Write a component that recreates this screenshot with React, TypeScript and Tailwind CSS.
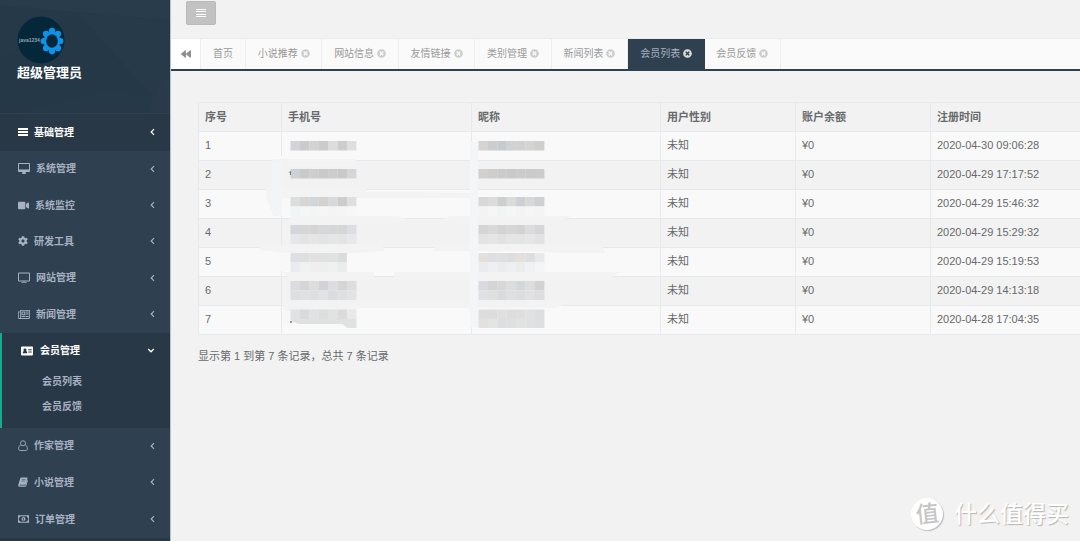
import React from "react";
import { FaBackward, FaCog, FaTimesCircle, FaVideo } from "react-icons/fa";

function BarsIcon() {
  return (
    <svg width="10" height="10" viewBox="0 0 10 10" fill="currentColor" shapeRendering="crispEdges" aria-hidden="true">
      <path d="M0 1h10v2H0zM0 4h10v2H0zM0 7h10v2H0z" />
    </svg>
  );
}

function AlignIcon() {
  return (
    <svg width="10" height="10" viewBox="0 0 10 10" fill="currentColor" shapeRendering="crispEdges" aria-hidden="true">
      <path d="M0 1h10v1H0zM0 3h10v1H0zM0 6h10v1H0zM0 8h10v1H0z" />
    </svg>
  );
}

function AngleLeftIcon() {
  return (
    <svg width="5" height="8" viewBox="0 0 5 8" fill="none" stroke="currentColor" strokeWidth="1.200" aria-hidden="true">
      <path d="M4 1.200 1.200 4 4 6.800" />
    </svg>
  );
}

function AngleDownIcon() {
  return (
    <svg width="8" height="5" viewBox="0 0 8 5" fill="none" stroke="currentColor" strokeWidth="1.300" aria-hidden="true">
      <path d="M1.200 1 4 3.800 6.800 1" />
    </svg>
  );
}

function DesktopIcon() {
  return (
    <svg width="12" height="11" viewBox="0 0 24 22" fill="currentColor" aria-hidden="true">
      <path fillRule="evenodd" d="M2 0h20a2 2 0 0 1 2 2v14a2 2 0 0 1-2 2h-7c0 1.500 1 2 1 3 0 .6-.4 1-1 1H9c-.6 0-1-.4-1-1 0-1 1-1.500 1-3H2a2 2 0 0 1-2-2V2a2 2 0 0 1 2-2zm0 2v11h20V2z" />
    </svg>
  );
}

function TvIcon() {
  return (
    <svg width="12" height="11" viewBox="0 0 24 22" fill="currentColor" aria-hidden="true">
      <path fillRule="evenodd" d="M2 1h20a2 2 0 0 1 2 2v14a2 2 0 0 1-2 2h-9v1h4v1.500H7V20h4v-1H2a2 2 0 0 1-2-2V3a2 2 0 0 1 2-2zm0 2v14h20V3z" />
    </svg>
  );
}

function NewsIcon() {
  return (
    <svg width="12" height="9" viewBox="0 0 24 18" fill="currentColor" aria-hidden="true">
      <path fillRule="evenodd" d="M4 0h20v15a3 3 0 0 1-3 3H3a3 3 0 0 1-3-3V3h4zm-2.400 4.500V15a1.200 1.200 0 0 0 2.400 0V4.500zM5.600 1.600V16H21a1.400 1.400 0 0 0 1.400-1.400v-13zM7 3h7.500v7.500H7zM9 5v3.500h3.500V5zM15.500 3H21.500v2h-6zm0 4h6v2h-6zm-8.500 5h7.500v2H7zm8.500 0h6v2h-6z" />
    </svg>
  );
}

function CardIcon() {
  return (
    <svg width="12" height="10" viewBox="0 0 24 20" fill="currentColor" aria-hidden="true">
      <path fillRule="evenodd" d="M2 1h20a2 2 0 0 1 2 2v14a2 2 0 0 1-2 2H2a2 2 0 0 1-2-2V3a2 2 0 0 1 2-2zm6 4a2.800 2.800 0 0 0-2 5c-1.600.5-2.500 2-2.500 4.500h9c0-2.500-.9-4-2.500-4.500a2.800 2.800 0 0 0-2-5zm6.500 1.500v2h7v-2zm0 4.500v2h7v-2z" />
    </svg>
  );
}

function UserIcon() {
  return (
    <svg width="10" height="11" viewBox="0 0 20 22" fill="none" stroke="currentColor" strokeWidth="1.800" aria-hidden="true">
      <circle cx="10" cy="6.500" r="5" />
      <path d="M5.500 10C2.500 11 1.200 14 1.200 17.500c0 2 1.200 3.500 3 3.500h11.600c1.800 0 3-1.500 3-3.500 0-3.500-1.300-6.500-4.300-7.500" />
    </svg>
  );
}

function BookIcon() {
  return (
    <svg width="10" height="10" viewBox="0 0 20 20" fill="currentColor" aria-hidden="true">
      <path fillRule="evenodd" d="M7 1h10.500c1.200 0 1.800 1 1.500 2l-3.200 11c-.3 1-1 1.500-2 1.500H3.500c-.8 0-.8 1.300.5 1.300h11L18.500 6c1.200.6 1.200 1.500 1 2.300L16.500 18c-.3.900-1.200 1.500-2 1.500H3.200C1.200 19.500 0 17.500.5 15.800L4.200 3.500C4.700 1.800 5.500 1 7 1zm.8 3.500-.3.900h7.400l.3-.9zM7 7.400l-.3.900H14l.3-.9z" />
    </svg>
  );
}

function MoneyIcon() {
  return (
    <svg width="11" height="8" viewBox="0 0 24 16" fill="currentColor" aria-hidden="true">
      <path fillRule="evenodd" d="M0 0h24v16H0zm5 1.800A3.200 3.200 0 0 1 1.800 5v6A3.200 3.200 0 0 1 5 14.200h14a3.200 3.200 0 0 1 3.200-3.200V5A3.200 3.200 0 0 1 19 1.800z" />
      <path fillRule="evenodd" d="M12 3c2.500 0 4 2.300 4 5s-1.500 5-4 5-4-2.300-4-5 1.500-5 4-5zm-.6 2L10 6.200v1l1.200-.4V10H10v1.200h4V10h-1.200V5z" />
    </svg>
  );
}

type Item = { label: string; icon: React.ReactNode };

const mainItems: Item[] = [
  { label: "系统管理", icon: <DesktopIcon /> },
  { label: "系统监控", icon: <FaVideo size={11} /> },
  { label: "研发工具", icon: <FaCog size={10} /> },
  { label: "网站管理", icon: <TvIcon /> },
  { label: "新闻管理", icon: <NewsIcon /> },
];

const lowerItems: Item[] = [
  { label: "作家管理", icon: <UserIcon /> },
  { label: "小说管理", icon: <BookIcon /> },
  { label: "订单管理", icon: <MoneyIcon /> },
];

function MenuLink({ label, icon }: Item) {
  return (
    <a href="#" className="flex h-full items-center gap-[6px] pr-[15px] pb-px pl-[18px]">
      {icon}
      <span className="flex-1">{label}</span>
      <AngleLeftIcon />
    </a>
  );
}

function Avatar() {
  return (
    <svg width="48" height="48" viewBox="0 0 48 48" role="img" aria-label="avatar">
      <circle cx="24" cy="24" r="23.500" fill="#04283a" />
      <text x="2" y="26" fontSize="5" fill="#8fa2ad" fontFamily="Liberation Sans">java1234</text>
      <g fill="#0d93ea">
        <circle cx="35" cy="15" r="3.200" />
        <circle cx="41" cy="17.800" r="3.100" />
        <circle cx="43.400" cy="25" r="3.100" />
        <circle cx="41" cy="32.200" r="3.100" />
        <circle cx="35" cy="35" r="3.200" />
        <circle cx="29" cy="32.200" r="3.100" />
        <circle cx="26.600" cy="25" r="3.100" />
        <circle cx="29" cy="17.800" r="3.100" />
        <ellipse cx="35" cy="25" rx="8.400" ry="9.600" />
      </g>
      <ellipse cx="35" cy="25" rx="5.800" ry="6.800" fill="#04283a" />
    </svg>
  );
}

function Sidebar() {
  return (
    <aside className="w-[170px] shrink-0 bg-[#2f4050] text-[10px] font-semibold text-[#a7b1c2]">
      <div className="relative h-[113px] overflow-hidden bg-[#263949] pt-4 pl-[17px]">
        <svg className="absolute inset-0 h-full w-full" viewBox="0 0 170 113" preserveAspectRatio="none" aria-hidden="true">
          <path d="M0 0h170v20L76 12 0 5z" fill="#293c4b" />
          <path d="M76 12 170 20v70l-18 6z" fill="#273a49" />
          <path d="M76 12 152 96 100 92 20 113H0V60z" fill="#253847" />
          <path d="M152 96 170 75v38h-20z" fill="#293b4a" />
        </svg>
        <div className="relative">
          <Avatar />
          <div className="text-[13px] leading-[18px] text-white">超级管理员</div>
        </div>
      </div>
      <nav>
        <div className="h-[38px] border-t border-[#2f4050] bg-[#293846] text-white">
          <MenuLink label="基础管理" icon={<BarsIcon />} />
        </div>
        <div className="grid h-[182px] auto-rows-fr">
          {mainItems.map((i) => (
            <MenuLink key={i.label} {...i} />
          ))}
        </div>
        <div className="border-l-2 border-[#19aa8d] bg-[#293846] pb-[9px]">
          <a href="#" className="flex h-9 items-center gap-[7px] pr-[15px] pb-px pl-[19px] text-white">
            <CardIcon />
            <span className="flex-1">会员管理</span>
            <AngleDownIcon />
          </a>
          <a href="#" className="flex h-[25px] items-center pl-10">会员列表</a>
          <a href="#" className="flex h-[25px] items-center pl-10">会员反馈</a>
        </div>
        <div className="grid h-[110px] auto-rows-fr">
          {lowerItems.map((i) => (
            <MenuLink key={i.label} {...i} />
          ))}
        </div>
      </nav>
      <div className="h-[3px] bg-[#293846]" />
    </aside>
  );
}

const tabs = ["小说推荐", "网站信息", "友情链接", "类别管理", "新闻列表", "会员列表", "会员反馈"];

function Tabs() {
  return (
    <div className="flex h-[33px] border-t border-b-2 border-t-[#ebebeb] border-b-[#2f4050] bg-[#fafafa] text-[10px] text-[#999999]">
      <button aria-label="向左滚动" className="flex w-[30px] items-center justify-center border-r border-[#eeeeee] bg-white text-[#8f8f8f]">
        <FaBackward size={10} />
      </button>
      <a href="#" className="flex w-[45px] items-center justify-center border-r border-[#eeeeee] pb-px">首页</a>
      <div className="grid w-[535px] grid-cols-7">
        {tabs.map((t) => {
          const active = t === "会员列表";
          return (
            <div
              key={t}
              className={
                active
                  ? "flex items-center justify-center gap-[3px] bg-[#2f4050] pb-px text-[#a7b1c2]"
                  : "flex items-center justify-center gap-[3px] border-r border-[#eeeeee] pb-px"
              }
            >
              <a href="#">{t}</a>
              <button aria-label={"关闭" + t} className={active ? "text-[#dddddd]" : "text-[#cccccc]"}>
                <FaTimesCircle size={9} />
              </button>
            </div>
          );
        })}
      </div>
    </div>
  );
}

const dates = [
  "2020-04-30 09:06:28",
  "2020-04-29 17:17:52",
  "2020-04-29 15:46:32",
  "2020-04-29 15:29:32",
  "2020-04-29 15:19:53",
  "2020-04-29 14:13:18",
  "2020-04-28 17:04:35",
];
const heads = ["序号", "手机号", "昵称", "用户性别", "账户余额", "注册时间"];

type Strip = [number, number, string[]];
const strips: Strip[] = [
  [290.5, 141, ["#d3d4d8", "#cbcbcb", "#d2d2d3", "#cbcbcb", "#dcddde", "#cdcdce", "#dedfe1"]],
  [290.5, 169, ["#cdd0d4", "#cacaca", "#cecece", "#c9c9c9", "#cccccc", "#c9c9c9", "#d4d6da"]],
  [290.5, 197, ["#dcdddf", "#d8d6d5", "#d2d6d9", "#d3d1d0", "#d7d9dd", "#cdcdcd", "#dddfe1"]],
  [290.5, 206.5, ["#f1f4f4", "#f5f5f5", "#f3f4f4", "#f6f6f6", "#f3f4f4", "#f5f5f5", "#f7f7f7"]],
  [290.5, 225, ["#d5d6d9", "#d6d6d7", "#d5d5d5", "#d7d7d7", "#d5d6d7", "#d6d6d7", "#dddee2"]],
  [290.5, 234.5, ["#e5e6e8", "#e3e3e4", "#e6e6e7", "#e2e3e4", "#e5e5e5", "#e3e4e4", "#e8e8ea"]],
  [290.5, 253, ["#dddfe2", "#dedfe0", "#e3e1df", "#dfe0e0", "#dfe2e2", "#dbdddd"]],
  [290.5, 262.5, ["#e9ecee", "#f0f1f1", "#efefef", "#edefef", "#eff0f0", "#ebecec"]],
  [290.5, 281, ["#dbdce0", "#d5d5d6", "#dddddf", "#d3d3d5", "#dcddde", "#d5d5d6", "#dddde0"]],
  [290.5, 290.5, ["#dedfe2", "#e0e1e2", "#dddfe1", "#e1e2e3", "#dadce0", "#dfe0e1", "#e3e3e5"]],
  [290.5, 309.5, ["#e1e2e4", "#dadadb", "#e0e1e2", "#dddddd", "#e1e2e2", "#dbdbdc", "#e8e9ea"]],
  [478.5, 141, ["#d6d4d2", "#cccdd0", "#c9cacc", "#d0d1d2", "#d2d1d0", "#d6d4d1", "#cfcfd0"]],
  [478.5, 169, ["#d2d0ce", "#cdcdce", "#cbcbcb", "#c9c9c9", "#cbcbcb", "#cacaca", "#cbcbcc"]],
  [478.5, 197, ["#d9d7d7", "#dcdcdc", "#cdcecf", "#dadcda", "#cecfd2", "#d8d8d9", "#cfd0d2"]],
  [478.5, 206.5, ["#f3f3f4", "#f6f6f6", "#f2f3f3", "#f5f6f6", "#f3f3f4", "#f6f6f6", "#f3f4f4"]],
  [478.5, 225, ["#d5d5d6", "#d9d9da", "#d3d3d4", "#d6d6d7", "#d3d3d4", "#dcdcdd", "#d5d6d8"]],
  [478.5, 234.5, ["#e3e3e4", "#e5e5e5", "#e1e2e3", "#e5e5e6", "#e3e4e4", "#e6e6e7", "#e2e2e4"]],
  [478.5, 253, ["#e5e0dd", "#dddfe0", "#dfdfdf", "#dddedf", "#e3dfdc", "#dddede", "#e7e9eb"]],
  [478.5, 262.5, ["#eaebed", "#edeff0", "#eaeced", "#eeefef", "#ebecec", "#f0f1f2", "#f3f5f7"]],
  [478.5, 281, ["#d9dadd", "#d5d5d6", "#d8d8d9", "#dcdddd", "#d5d6d9", "#dddddd", "#d2d2d4"]],
  [478.5, 290.5, ["#e0e1e3", "#dfdfe0", "#d9dbdc", "#e0e0e0", "#dcdddf", "#e1e1e1", "#dddddf"]],
  [478.5, 309.5, ["#dddddf", "#dcdcdd", "#e0e0df", "#dddddd", "#dededf", "#e1e1e1", "#dddedf"]],
  [478.5, 318.5, ["#e3e1e0", "#e2e5e3", "#dddedf", "#dfdfdf", "#dfe3e1", "#e0e1e2", "#dedfe0"]],
];

function Redaction() {
  return (
    <svg className="pointer-events-none absolute top-0 left-0" width="480" height="240" viewBox="198 102 480 240" aria-hidden="true">
      <g fill="#f3f3f4">
        <path d="M273 159h84l-3 7h-60l-20 4v12h-3z" />
        <path d="M266 187h100v4l104 2v5H285l-4 18h-7l-8-18z" />
        <path d="M291 216h107l8 3h38l6-3h122l-9 3H470v4H291z" />
        <path d="M260 245h122l3 6-32 2H290l-30-3z" />
        <path d="M434 245h168l3 8h-45l-25-2H434z" />
        <path d="M283 272h91v7h20v-7h226l-12 7H290z" />
        <path d="M283 302h287l-15 6H360l-8 3H285z" />
      </g>
      <g fill="#f8f8f8">
        <path d="M279 156h10v3h-10zM279 198h12v18h-12zM279 253h12v18h-12z" />
        <path d="M366 190h104v2H366z" />
      </g>
      <path d="M471 142h7v185h-8V142z" fill="#f4f5f7" />
      <path d="M272 161h10v54h-10z" fill="#f3f4f6" />
      <path d="M283 311h7v14h-7z" fill="#f7f7f7" />
      {strips.map(([x, y, colors]) =>
        colors.map((c, i) => <rect key={`${x}-${y}-${i}`} x={x + i * 9.4} y={y} width="9.500" height="9.500" fill={c} />)
      )}
      <path d="M290.500 319h66v9h-9l-5-4h-44l-7.500-3z" fill="#e0e1e1" />
      <path d="M288 172.500l3-1.500v4h-1v-2.500z" fill="#777777" />
      <path d="M290 321h2v2h-2z" fill="#999999" />
    </svg>
  );
}

const cell = "border border-[#e7eaec] px-[6px] pb-[2px] text-left";

function MembersTable() {
  return (
    <div className="relative">
      <table className="w-full table-fixed border-collapse text-[11px] leading-[18px]">
        <colgroup>
          <col className="w-[83px]" />
          <col className="w-[190px]" />
          <col className="w-[189px]" />
          <col className="w-[135px]" />
          <col className="w-[135px]" />
          <col />
        </colgroup>
        <thead>
          <tr className="h-[29px]">
            {heads.map((h) => (
              <th key={h} className="border border-[#e7eaec] px-[6px] text-left font-semibold last:border-r-0">{h}</th>
            ))}
          </tr>
        </thead>
        <tbody>
          {dates.map((d, i) => (
            <tr key={d} className="h-[29px] odd:bg-[#f9f9f9]">
              <td className={cell}>{i + 1}</td>
              <td className={cell} />
              <td className={cell} />
              <td className={cell}>未知</td>
              <td className={cell}>¥0</td>
              <td className={cell + " border-r-0 whitespace-nowrap"}>{d}</td>
            </tr>
          ))}
        </tbody>
      </table>
      <Redaction />
    </div>
  );
}

function Watermark() {
  return (
    <div className="absolute right-[11px] bottom-[11px] flex items-center gap-[11px] text-white">
      <span className="flex h-8 w-8 items-center justify-center rounded-full bg-white text-[23px] leading-none font-medium text-[#c6c6c6] shadow-[1px_1px_1px_#bbbbbb]">
        <span className="-rotate-6">值</span>
      </span>
      <span className="text-[23px] leading-8 font-medium [text-shadow:1px_1px_1px_#b5b5b5]">什么值得买</span>
    </div>
  );
}

export default function App() {
  return (
    <div className="relative flex min-h-screen overflow-hidden bg-[#f2f2f2] font-['Liberation_Sans','Noto_Sans_CJK_SC',sans-serif] text-[#676a6c]">
      <Sidebar />
      <main className="min-w-0 flex-1 border-l border-[#b9bfc6]">
        <header className="h-[38px] pt-px pl-[15px]">
          <button aria-label="菜单" className="flex h-6 w-[30px] items-center justify-center rounded-[2px] border border-[#bababa] bg-[#c2c2c2] text-white">
            <AlignIcon />
          </button>
        </header>
        <Tabs />
        <section className="pt-[31px] pl-[27px]">
          <MembersTable />
          <p className="pt-[12px] text-[11px] leading-[18px]">显示第 1 到第 7 条记录，总共 7 条记录</p>
        </section>
      </main>
      <Watermark />
    </div>
  );
}
